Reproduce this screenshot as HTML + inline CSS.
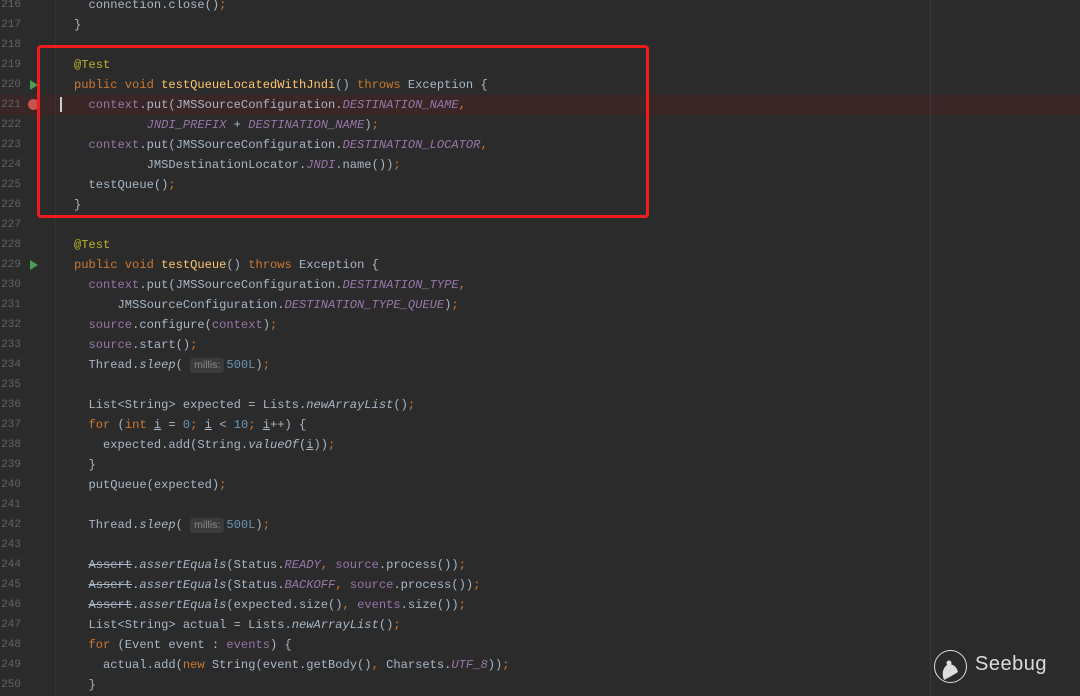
<!DOCTYPE html>
<html><head><meta charset="utf-8"><style>
body{margin:0;width:1080px;height:696px;background:#2b2b2b;overflow:hidden;position:relative;font-family:"Liberation Mono",monospace;font-size:12.1px;}
.ln{position:absolute;left:0;width:21px;text-align:right;color:#606366;height:20px;line-height:20px;font-size:11px}
.cd{position:absolute;left:74px;height:20px;line-height:21px;color:#a9b7c6;white-space:pre}
.k{color:#cc7832}.a{color:#bbb529}.m{color:#ffc66d}.f{color:#9876aa;font-style:italic}.p{color:#9876aa}.n{color:#6897bb}.i{font-style:italic}.s{text-decoration:line-through}.u{text-decoration:underline}
.h{display:inline-block;background:#3b3b3b;color:#8a8a8a;font-family:"Liberation Sans",sans-serif;font-size:10.5px;border-radius:3px;padding:0 4px;line-height:15px;margin-right:2px}
</style></head><body>
<div style="position:absolute;left:0;top:95px;width:1080px;height:20px;background:#3a2626"></div>
<div style="position:absolute;left:55px;top:0;width:1px;height:696px;background:#333"></div>
<div style="position:absolute;left:930px;top:0;width:1px;height:696px;background:#3a3a3a"></div>
<div style="position:absolute;left:28px;top:99px;width:11px;height:11px;border-radius:50%;background:#c75450"></div>
<div style="position:absolute;left:60px;top:97px;width:2px;height:15px;background:#ccc"></div>
<svg style="position:absolute;left:29px;top:80px" width="10" height="10"><path d="M1 0 L9 5 L1 10Z" fill="#499c54"/></svg>
<svg style="position:absolute;left:29px;top:260px" width="10" height="10"><path d="M1 0 L9 5 L1 10Z" fill="#499c54"/></svg>
<div style="position:absolute;left:37px;top:45px;width:606px;height:167px;border:3px solid #f21c1c;border-radius:4px"></div>
<div id="c"></div>
<div style="position:absolute;left:934px;top:650px;width:33px;height:33px;border:1.5px solid #ddd;border-radius:50%;box-sizing:border-box"></div>
<svg style="position:absolute;left:938px;top:658px" width="26" height="26"><path d="M6 22 Q2 12 10 6 Q18 6 20 14 Q14 18 6 22Z" fill="#ddd"/><circle cx="11" cy="5" r="2.5" fill="#ddd"/></svg>
<div style="position:absolute;left:975px;top:653px;color:#ddd;font-family:'Liberation Sans',sans-serif;font-size:20px;letter-spacing:0.5px">Seebug</div>
<script>
const L=[
'  connection.close()<span class=k>;</span>',
'}',
'',
'<span class=a>@Test</span>',
'<span class=k>public void </span><span class=m>testQueueLocatedWithJndi</span>() <span class=k>throws </span>Exception {',
'  <span class=p>context</span>.put(JMSSourceConfiguration.<span class=f>DESTINATION_NAME</span><span class=k>,</span>',
'          <span class=f>JNDI_PREFIX</span> + <span class=f>DESTINATION_NAME</span>)<span class=k>;</span>',
'  <span class=p>context</span>.put(JMSSourceConfiguration.<span class=f>DESTINATION_LOCATOR</span><span class=k>,</span>',
'          JMSDestinationLocator.<span class=f>JNDI</span>.name())<span class=k>;</span>',
'  testQueue()<span class=k>;</span>',
'}',
'',
'<span class=a>@Test</span>',
'<span class=k>public void </span><span class=m>testQueue</span>() <span class=k>throws </span>Exception {',
'  <span class=p>context</span>.put(JMSSourceConfiguration.<span class=f>DESTINATION_TYPE</span><span class=k>,</span>',
'      JMSSourceConfiguration.<span class=f>DESTINATION_TYPE_QUEUE</span>)<span class=k>;</span>',
'  <span class=p>source</span>.configure(<span class=p>context</span>)<span class=k>;</span>',
'  <span class=p>source</span>.start()<span class=k>;</span>',
'  Thread.<span class=i>sleep</span>( <span class=h>millis:</span><span class=n>500L</span>)<span class=k>;</span>',
'',
'  List&lt;String&gt; expected = Lists.<span class=i>newArrayList</span>()<span class=k>;</span>',
'  <span class=k>for </span>(<span class=k>int </span><span class=u>i</span> = <span class=n>0</span><span class=k>; </span><span class=u>i</span> &lt; <span class=n>10</span><span class=k>; </span><span class=u>i</span>++) {',
'    expected.add(String.<span class=i>valueOf</span>(<span class=u>i</span>))<span class=k>;</span>',
'  }',
'  putQueue(expected)<span class=k>;</span>',
'',
'  Thread.<span class=i>sleep</span>( <span class=h>millis:</span><span class=n>500L</span>)<span class=k>;</span>',
'',
'  <span class=s>Assert</span>.<span class=i>assertEquals</span>(Status.<span class=f>READY</span><span class=k>, </span><span class=p>source</span>.process())<span class=k>;</span>',
'  <span class=s>Assert</span>.<span class=i>assertEquals</span>(Status.<span class=f>BACKOFF</span><span class=k>, </span><span class=p>source</span>.process())<span class=k>;</span>',
'  <span class=s>Assert</span>.<span class=i>assertEquals</span>(expected.size()<span class=k>, </span><span class=p>events</span>.size())<span class=k>;</span>',
'  List&lt;String&gt; actual = Lists.<span class=i>newArrayList</span>()<span class=k>;</span>',
'  <span class=k>for </span>(Event event : <span class=p>events</span>) {',
'    actual.add(<span class=k>new </span>String(event.getBody()<span class=k>, </span>Charsets.<span class=f>UTF_8</span>))<span class=k>;</span>',
'  }'];
let h='';
L.forEach((s,k)=>{const y=-5+20*k;h+=`<div class=ln style="top:${y}px">${216+k}</div><div class=cd style="top:${y}px">${s}</div>`;});
document.getElementById('c').innerHTML=h;
</script>
</body></html>
